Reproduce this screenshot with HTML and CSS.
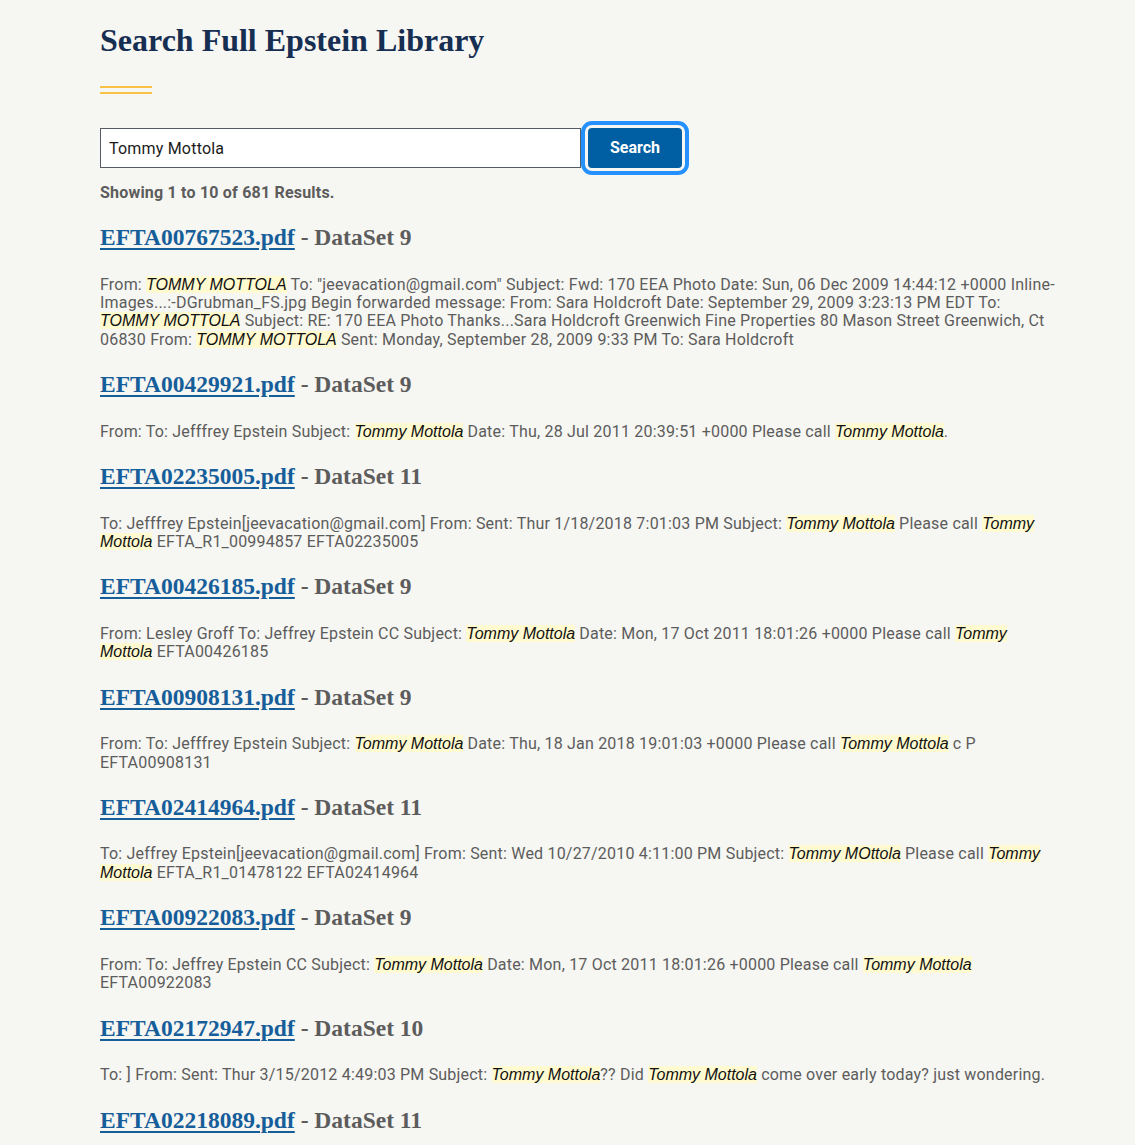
FILE: index.html
```html
<!DOCTYPE html>
<html lang="en">
<head>
<meta charset="utf-8">
<title>Search Full Epstein Library</title>
<link rel="stylesheet" href="styles.css">
</head>
<body>
<main class="page">
  <h1 class="title">Search Full Epstein Library</h1>
  <div class="rule"></div>
  <form class="search" onsubmit="return false">
    <input class="search-input" type="text" value="Tommy Mottola">
    <button class="search-btn" type="submit">Search</button>
  </form>
  <p class="count">Showing 1 to 10 of 681 Results.</p>

  <div class="results">
  <div class="result">
    <h3 class="result-title"><a href="#">EFTA00767523.pdf</a> - DataSet 9</h3>
    <p class="snippet">From: <mark>TOMMY MOTTOLA</mark> To: "jeevacation@gmail.com" Subject: Fwd: 170 EEA Photo Date: Sun, 06 Dec 2009 14:44:12 +0000 Inline-Images...:-DGrubman_FS.jpg Begin forwarded message: From: Sara Holdcroft Date: September 29, 2009 3:23:13 PM EDT To: <mark>TOMMY MOTTOLA</mark> Subject: RE: 170 EEA Photo Thanks...Sara Holdcroft Greenwich Fine Properties 80 Mason Street Greenwich, Ct 06830 From: <mark>TOMMY MOTTOLA</mark> Sent: Monday, September 28, 2009 9:33 PM To: Sara Holdcroft</p>
  </div>

  <div class="result">
    <h3 class="result-title"><a href="#">EFTA00429921.pdf</a> - DataSet 9</h3>
    <p class="snippet">From: To: Jefffrey Epstein Subject: <mark>Tommy Mottola</mark> Date: Thu, 28 Jul 2011 20:39:51 +0000 Please call <mark>Tommy Mottola</mark>.</p>
  </div>

  <div class="result">
    <h3 class="result-title"><a href="#">EFTA02235005.pdf</a> - DataSet 11</h3>
    <p class="snippet">To: Jefffrey Epstein[jeevacation@gmail.com] From: Sent: Thur 1/18/2018 7:01:03 PM Subject: <mark>Tommy Mottola</mark> Please call <mark>Tommy Mottola</mark> EFTA_R1_00994857 EFTA02235005</p>
  </div>

  <div class="result">
    <h3 class="result-title"><a href="#">EFTA00426185.pdf</a> - DataSet 9</h3>
    <p class="snippet">From: Lesley Groff To: Jeffrey Epstein CC Subject: <mark>Tommy Mottola</mark> Date: Mon, 17 Oct 2011 18:01:26 +0000 Please call <mark>Tommy Mottola</mark> EFTA00426185</p>
  </div>

  <div class="result">
    <h3 class="result-title"><a href="#">EFTA00908131.pdf</a> - DataSet 9</h3>
    <p class="snippet">From: To: Jefffrey Epstein Subject: <mark>Tommy Mottola</mark> Date: Thu, 18 Jan 2018 19:01:03 +0000 Please call <mark>Tommy Mottola</mark> c P EFTA00908131</p>
  </div>

  <div class="result">
    <h3 class="result-title"><a href="#">EFTA02414964.pdf</a> - DataSet 11</h3>
    <p class="snippet">To: Jeffrey Epstein[jeevacation@gmail.com] From: Sent: Wed 10/27/2010 4:11:00 PM Subject: <mark>Tommy MOttola</mark> Please call <mark>Tommy Mottola</mark> EFTA_R1_01478122 EFTA02414964</p>
  </div>

  <div class="result">
    <h3 class="result-title"><a href="#">EFTA00922083.pdf</a> - DataSet 9</h3>
    <p class="snippet">From: To: Jeffrey Epstein CC Subject: <mark>Tommy Mottola</mark> Date: Mon, 17 Oct 2011 18:01:26 +0000 Please call <mark>Tommy Mottola</mark> EFTA00922083</p>
  </div>

  <div class="result">
    <h3 class="result-title"><a href="#">EFTA02172947.pdf</a> - DataSet 10</h3>
    <p class="snippet">To: ] From: Sent: Thur 3/15/2012 4:49:03 PM Subject: <mark>Tommy Mottola</mark>?? Did <mark>Tommy Mottola</mark> come over early today? just wondering.</p>
  </div>

  <div class="result">
    <h3 class="result-title"><a href="#">EFTA02218089.pdf</a> - DataSet 11</h3>
  </div>
  </div>
</main>
</body>
</html>
```

FILE: styles.css
```css
html, body {
  margin: 0;
  padding: 0;
  background: #f6f6f2;
}

body {
  font-family: "Roboto", "Liberation Sans", sans-serif;
  color: #5c5c5c;
}

.page {
  width: 960px;
  padding: 20px 0 40px 100px;
}

.title {
  margin: 0;
  font-family: "Liberation Serif", serif;
  font-weight: bold;
  font-size: 32px;
  line-height: 40px;
  color: #162e51;
}

.rule {
  width: 52px;
  height: 4px;
  border-top: 2px solid #fac244;
  border-bottom: 2px solid #fac244;
  margin-top: 26px;
}

.search {
  display: flex;
  align-items: center;
  margin-top: 34px;
}

.search-input {
  box-sizing: border-box;
  width: 481px;
  height: 40px;
  border: 1px solid #565c65;
  background: #fff;
  padding: 0 8px;
  font-family: "Roboto", "Liberation Sans", sans-serif;
  font-size: 16px;
  letter-spacing: 0.2px;
  color: #1b1b1b;
  margin: 0;
}

.search-btn {
  box-sizing: border-box;
  width: 94px;
  height: 40px;
  margin: -1px 0 0 7px;
  border: none;
  border-radius: 4px;
  background: #005ea2;
  color: #fff;
  font-family: "Roboto", "Liberation Sans", sans-serif;
  font-weight: bold;
  font-size: 16px;
  outline: 4px solid #2491ff;
  outline-offset: 3px;
}

.count {
  margin: 15px 0 0;
  font-weight: bold;
  font-size: 16px;
  line-height: 20px;
  letter-spacing: 0.2px;
  color: #5c5c5c;
}

.results {
  padding-top: 20px;
}

.result + .result {
  margin-top: 21px;
}

.result-title {
  margin: 0;
  font-family: "Liberation Serif", serif;
  font-weight: bold;
  font-size: 23.5px;
  line-height: 28px;
  color: #5c5c5c;
}

.result-title a {
  color: #165e9a;
  text-decoration: underline;
  text-underline-offset: 3px;
  text-decoration-thickness: 2px;
}

.snippet {
  margin: 24.5px 0 0;
  font-size: 16px;
  line-height: 18.4px;
  letter-spacing: 0.2px;
  color: #5c5c5c;
}

mark {
  background: #fffad0;
  color: #111;
  font-family: "Liberation Sans", sans-serif;
  font-style: italic;
  letter-spacing: 0;
}
```
